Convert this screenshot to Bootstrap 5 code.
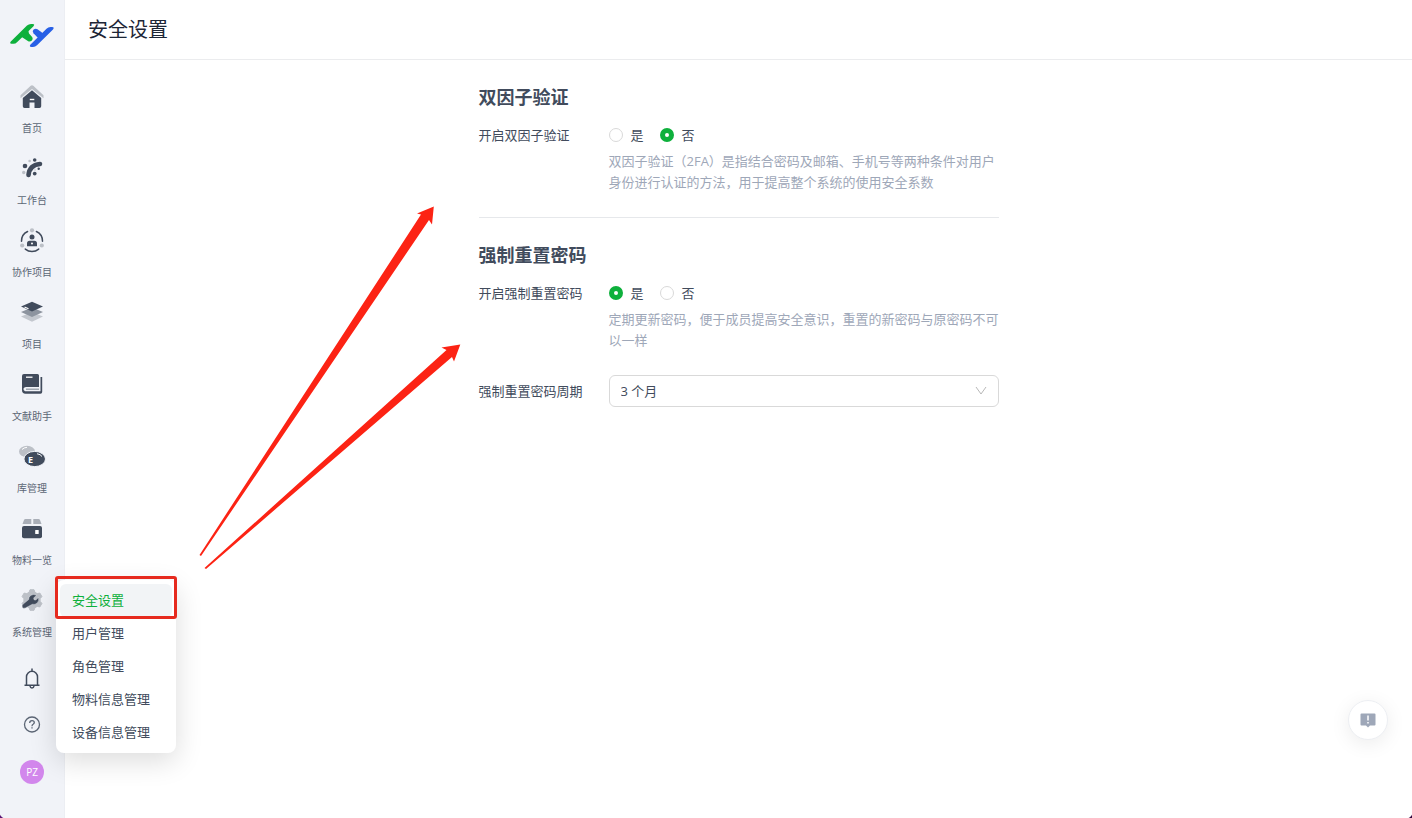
<!DOCTYPE html>
<html lang="zh-CN">
<head>
<meta charset="utf-8">
<meta name="viewport" content="width=device-width, initial-scale=1">
<title>安全设置</title>
<link href="https://cdn.jsdelivr.net/npm/bootstrap@5.3.0/dist/css/bootstrap.min.css" rel="stylesheet">
<style>
:root { --ink: #414b5c; --soft: #9ea7b8; --green: #0eb03c; --rail: #f1f3f8; --red: #e62a1e; }
body { font-family: "Open Sans", "Noto Sans CJK SC", sans-serif; font-size: 13px; line-height: 21px; color: var(--ink); background: #fff; }
.rail { width: 65px; flex: none; background: var(--rail); border-right: 1px solid #eceef3; padding-top: 22px; }
.rail-link { color: #5c6675; font-size: 10px; line-height: 16px; gap: 10px; padding-bottom: 20px; white-space: nowrap; text-decoration: none; }
.rail-list { margin-top: 36px; }
.rail-tools { gap: 24px; margin-top: 8px; }
.icon-btn { border: 0; background: none; padding: 0; color: #5c6675; line-height: 0; }
.avatar-btn { width: 24px; height: 24px; background: #d287ec; color: #fff; font-size: 10px; line-height: 24px; }
.flyout { position: absolute; left: 56px; top: -8px; width: 120px; padding: 4px; border-radius: 8px; background: #fff; box-shadow: 0 8px 28px rgba(0,0,0,.14); z-index: 5; }
.flyout-link { display: block; position: relative; padding: 0 12px; line-height: 33px; border-radius: 6px; color: var(--ink); text-decoration: none; white-space: nowrap; }
.flyout-link.current { background: #f2f4f6; color: var(--green); }
.flyout-link.current::after { content: ""; position: absolute; inset: -8px -5px -2px; border: 3px solid var(--red); border-radius: 3px; }
.topbar { height: 60px; padding: 0 23px; border-bottom: 1px solid #ebecee; }
.topbar h1 { font-size: 20px; line-height: 28px; font-weight: 400; color: #1d2636; }
.settings { max-width: 520px; padding-top: 23px; }
.settings h2 { font-size: 18px; line-height: 28px; font-weight: 700; margin-bottom: 8px; }
.settings hr { margin: 24px 0 23px; border-color: #e6e8eb; opacity: 1; }
.field-name { width: 130px; flex: none; line-height: 32px; font-size: 13px; }
.choices { height: 32px; gap: 16px; }
.choices input { width: 14px; height: 14px; margin: 0; border-color: #d9d9d9; }
.choices input:checked { background: #fff; border: 5px solid var(--green); }
.hint { color: var(--soft); }
.period { height: 32px; font-size: 13px; line-height: 20px; padding: 5px 36px 5px 11px; color: var(--ink); border-color: #d9d9d9; border-radius: 6px;
  background-image: url("data:image/svg+xml,%3Csvg xmlns='http://www.w3.org/2000/svg' viewBox='0 0 12 12'%3E%3Cpath d='M1 2l5 7 5-7' fill='none' stroke='%23b8b8b8'/%3E%3C/svg%3E"); background-size: 12px; background-position: right 11px center; }
.feedback { position: fixed; right: 24px; bottom: 78px; width: 40px; height: 40px; background: #fff; border: 1px solid #eceef2; box-shadow: 0 4px 20px rgba(0,0,0,.08); }
.pointers { position: absolute; left: 190px; top: 190px; pointer-events: none; z-index: 4; }
.window-edge { position: fixed; inset: auto 0 0 0; height: 6px; pointer-events: none; background: radial-gradient(circle at 100% 0, transparent 6px, #5b1673 7px) left / 6px 6px no-repeat, radial-gradient(circle at 0 0, transparent 6px, #32063f 7px) right / 6px 6px no-repeat; }
</style>
</head>
<body class="position-relative">
<div class="d-flex min-vh-100">
  <aside class="rail d-flex flex-column align-items-center">
    <a href="#" aria-label="主页">
      <svg class="d-block" width="44" height="26" viewBox="0 0 44 26">
        <g fill="#0eb03c"><path d="M.8 19.600 17 3.500Q18.700 2 21 2H22.500Q25.300 2 23.500 4.200L7 20.300Q5.500 21.800 3.500 21.800H1.500Q-.7 21.700.8 19.600Z"/><path d="M11 14.500 18 7.500 19 11.500 22.300 15.300Q23.300 17 21.900 18.500 20.200 19.800 18.200 19.200Z"/></g>
        <g fill="#2860e6"><path d="M20.300 22.700 36.500 6.700Q38.200 5.100 40.500 5.100H42Q44.800 5.200 43 7.400L27 23.300Q25.300 25.100 23 25.100H21.500Q19 25 20.300 22.700Z"/><path d="M29.500 17.500 34.500 12.500 27.500 7.200Q25.500 6 23.600 7.500 21.800 9.300 23.500 11.200Z"/></g>
      </svg>
    </a>
    <ul class="rail-list list-unstyled mb-0 w-100">
      <li><a class="rail-link d-flex flex-column align-items-center" href="#">
        <svg width="26" height="26" viewBox="0 0 26 26"><path d="M1.500 12.800V11.200L11.700 1.800q1.300-1 2.600 0L24.500 11.200v3L13 4.900 1.500 14.200Z" fill="#bcc0c7"/><path d="M13 6.300 22.200 14v8.300q0 1.700-1.700 1.700H15.500V18.500h-5V24H5.500Q3.800 24 3.800 22.300V14Z" fill="#414b5c"/><path d="M10.800 15.500h4.500" stroke="#fff" stroke-width="1.400"/></svg>
        <span>首页</span></a></li>
      <li><a class="rail-link d-flex flex-column align-items-center" href="#">
        <svg width="26" height="26" viewBox="0 0 26 26"><path d="M9.500 19Q10.500 9 21 8" fill="none" stroke="#414b5c" stroke-width="4.600" stroke-linecap="round"/><g fill="#414b5c"><circle cx="6" cy="10" r="2.300"/><circle cx="15.700" cy="4" r="1.800"/><circle cx="15.700" cy="17.600" r="1.900"/><circle cx="19.700" cy="12.800" r="1.200"/></g><g fill="#bcc0c7"><circle cx="4.700" cy="16.500" r="1.700"/><circle cx="10.600" cy="5" r="1.300"/><circle cx="16" cy="14" r=".7"/></g></svg>
        <span>工作台</span></a></li>
      <li><a class="rail-link d-flex flex-column align-items-center" href="#">
        <svg width="26" height="26" viewBox="0 0 26 26"><path d="M8.600 3.500A10.500 10.500 0 0 0 2.500 13.300M17.400 3.500a10.500 10.500 0 0 1 6.100 9.800M19.700 21.100a10.500 10.500 0 0 1-13.400 0" fill="none" stroke="#414b5c" stroke-width="1.500" stroke-linecap="round"/><g fill="#bcc0c7"><circle cx="13" cy="2.300" r="2.100"/><circle cx="3.200" cy="17.500" r="2.100"/><circle cx="22.800" cy="17.500" r="2.100"/></g><circle cx="13" cy="8.900" r="2.500" fill="#414b5c"/><path d="M8 18.300v-2.800Q8 12.800 10.700 12.800h4.600q2.700 0 2.700 2.700v2.800Z" fill="#414b5c"/><circle cx="13" cy="15.500" r="1" fill="#fff"/></svg>
        <span>协作项目</span></a></li>
      <li><a class="rail-link d-flex flex-column align-items-center" href="#">
        <svg width="26" height="26" viewBox="0 0 26 26"><path d="m2 16.500 11-4.500 11 4.500-11 5.300Z" fill="#c3c7ce"/><path d="m2 12 11-4.500L24 12l-11 5Z" fill="#8d949f"/><path d="m2 6.500 11-4.700 11 4.700-11 5Z" fill="#414b5c"/><path d="m5.500 7 4 1.800" stroke="#fff" stroke-width="1.200"/></svg>
        <span>项目</span></a></li>
      <li><a class="rail-link d-flex flex-column align-items-center" href="#">
        <svg width="26" height="26" viewBox="0 0 26 26"><path d="M5 2h13.500Q20 2 20 3.500V15H7q-2 0-2.500 1.500T6 19.300H21.500V5h1.700V20q0 1.800-1.800 1.800H6.500Q3 21.800 3 18V4q0-2 2-2Z" fill="#414b5c"/><path d="M7 5.200h6.500" stroke="#fff" stroke-width="1.300"/><path d="M7 17.200h13" stroke="#8d949f" stroke-width="1.200"/></svg>
        <span>文献助手</span></a></li>
      <li><a class="rail-link d-flex flex-column align-items-center" href="#">
        <svg width="26" height="26" viewBox="0 0 26 26" overflow="visible"><ellipse cx="8" cy="7.500" rx="8" ry="5.800" fill="#bcc0c7"/><ellipse cx="15.700" cy="15" rx="10.800" ry="7.600" fill="#414b5c" stroke="#f1f3f8"/><path d="M18 9.700q3.500.5 5 2.800M3 5.500Q5 3.500 8 3.300" fill="none" stroke="#fff"/><text x="9" y="19.300" font-family="Open Sans, sans-serif" font-size="9" font-weight="700" fill="#fff">E</text></svg>
        <span>库管理</span></a></li>
      <li><a class="rail-link d-flex flex-column align-items-center" href="#">
        <svg width="26" height="26" viewBox="0 0 26 26"><path d="M6.500 3h5.800v5H3.500L5 4q.4-1 1.500-1ZM14.300 3h5.200q1.100 0 1.500 1l1.500 4h-8.200Z" fill="#a9aeb7"/><rect x="3" y="10" width="20" height="12.300" rx="2" fill="#414b5c"/><rect x="16.200" y="14" width="3.500" height="4" rx=".5" fill="#fff"/></svg>
        <span>物料一览</span></a></li>
      <li class="position-relative"><a class="rail-link d-flex flex-column align-items-center" href="#">
        <svg width="26" height="26" viewBox="0 0 26 26"><path d="m11 1.700h4l.9 2.600 2.300 1.300 2.700-.5 2 3.500-1.800 2.100v2.600l1.800 2.100-2 3.500-2.700-.5-2.300 1.300-.9 2.600h-4l-.9-2.600-2.300-1.300-2.700.5-2-3.500 1.800-2.100v-2.600L3.100 8.600l2-3.500 2.700.5 2.300-1.300Z" fill="#bcc0c7" stroke="#bcc0c7" stroke-linejoin="round"/><path d="M17.500 7.200 14.700 10l.3 1.700 1.800.4 2.700-2.700Q20.500 13 18 15.200q-2.100 1.700-4.600 1.100L6.500 19.900q-2 .9-3.100-.5-1-1.500.5-3.100l5.800-4.700Q9.400 8.800 12 7.200q2.700-1.400 5.500 0Z" fill="#414b5c" stroke="#f1f3f8" stroke-width=".4"/></svg>
        <span>系统管理</span></a>
        <nav class="flyout" aria-label="系统管理">
          <a class="flyout-link current" href="#" aria-current="page">安全设置</a>
          <a class="flyout-link" href="#">用户管理</a>
          <a class="flyout-link" href="#">角色管理</a>
          <a class="flyout-link" href="#">物料信息管理</a>
          <a class="flyout-link" href="#">设备信息管理</a>
        </nav></li>
    </ul>
    <div class="rail-tools d-flex flex-column align-items-center">
      <button class="icon-btn" type="button" aria-label="通知"><svg width="22" height="22" viewBox="0 0 22 22" fill="none" stroke="#414b5c" stroke-width="1.500"><path d="M3.500 17.200h15M5.500 17V8.800a5.500 5.500 0 0 1 11 0V17M11 .5V3M9 18q.3 2 2 2t2-2"/></svg></button>
      <button class="icon-btn" type="button" aria-label="帮助"><svg width="22" height="22" viewBox="0 0 22 22" fill="none" stroke="currentColor" stroke-width="1.300"><circle cx="11" cy="10.500" r="7.500"/><path d="M8.700 9q0-2.400 2.300-2.400t2.300 2q0 1-1.200 1.700-1.100.6-1.100 1.900M11 13.200v1.400"/></svg></button>
      <button class="icon-btn avatar-btn rounded-circle" type="button">PZ</button>
    </div>
  </aside>
  <div class="flex-grow-1">
    <header class="topbar d-flex align-items-center"><h1 class="mb-0">安全设置</h1></header>
    <main>
      <form class="settings mx-auto">
        <h2>双因子验证</h2>
        <div class="d-flex" role="radiogroup" aria-labelledby="tfa">
          <span class="field-name" id="tfa">开启双因子验证</span>
          <div>
            <div class="choices d-flex align-items-center">
              <label class="d-flex align-items-center gap-2"><input class="form-check-input" type="radio" name="tfa">是</label>
              <label class="d-flex align-items-center gap-2"><input class="form-check-input" type="radio" name="tfa" checked>否</label>
            </div>
            <p class="hint mb-0">双因子验证（2FA）是指结合密码及邮箱、手机号等两种条件对用户身份进行认证的方法，用于提高整个系统的使用安全系数</p>
          </div>
        </div>
        <hr>
        <h2>强制重置密码</h2>
        <div class="d-flex" role="radiogroup" aria-labelledby="reset">
          <span class="field-name" id="reset">开启强制重置密码</span>
          <div>
            <div class="choices d-flex align-items-center">
              <label class="d-flex align-items-center gap-2"><input class="form-check-input" type="radio" name="reset" checked>是</label>
              <label class="d-flex align-items-center gap-2"><input class="form-check-input" type="radio" name="reset">否</label>
            </div>
            <p class="hint mb-0">定期更新密码，便于成员提高安全意识，重置的新密码与原密码不可以一样</p>
          </div>
        </div>
        <div class="d-flex mt-4">
          <label class="field-name" for="period">强制重置密码周期</label>
          <select class="form-select period" id="period"><option>3 个月</option></select>
        </div>
      </form>
    </main>
  </div>
</div>
<svg class="pointers" width="290" height="390" viewBox="190 190 290 390" fill="#fc2314" aria-hidden="true">
  <path d="M199.500 555 421 214.500 417 213.500 433.800 206.500 432 224.500 429 220 201 556Z"/>
  <path d="M204.500 568 446.500 350 441.500 347.500 460.300 344.500 454 361.500 452 357 206 569Z"/>
</svg>
<button class="feedback rounded-circle d-flex align-items-center justify-content-center p-0" type="button" aria-label="反馈">
  <svg width="16" height="16" viewBox="0 0 16 16"><path d="M1.500 1.500h13q1 0 1 1v10q0 1-1 1H10L8 15.500 6 13.500H1.500q-1 0-1-1v-10q0-1 1-1Z" fill="#9ea7b8"/><path d="M8 3.500v5M8 10v1.500" stroke="#fff" stroke-width="1.500"/></svg>
</button>
<div class="window-edge" aria-hidden="true"></div>
<script src="https://cdn.jsdelivr.net/npm/bootstrap@5.3.0/dist/js/bootstrap.bundle.min.js"></script>
</body>
</html>
